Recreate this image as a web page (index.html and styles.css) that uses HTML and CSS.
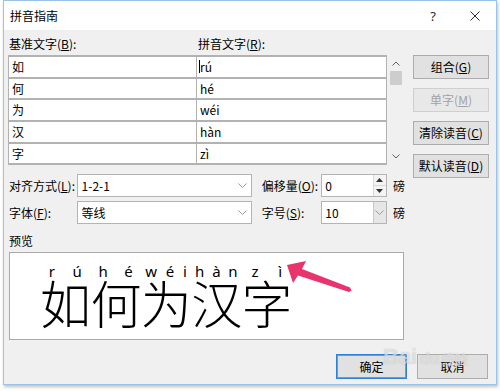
FILE: index.html
```html
<!DOCTYPE html>
<html lang="zh-CN">
<head>
<meta charset="utf-8">
<title>拼音指南</title>
<link rel="stylesheet" href="styles.css">
</head>
<body>
<div class="window">
  <div class="titlebar">
    <span class="title">拼音指南</span>
    <div class="tb-controls">
      <span class="tb-btn help">?</span>
      <span class="tb-btn close">
        <svg width="10" height="10" viewBox="0 0 10 10"><path d="M0.5 0.5L9.5 9.5M9.5 0.5L0.5 9.5" stroke="#2b2b2b" stroke-width="1" fill="none"/></svg>
      </span>
    </div>
  </div>
  <div class="content">
    <div class="main">
      <div class="list-area">
        <div class="col-labels">
          <span class="lbl-base">基准文字(<u>B</u>):</span>
          <span class="lbl-ruby">拼音文字(<u>R</u>):</span>
        </div>
        <div class="table-wrap">
          <div class="table">
            <div class="row"><span class="cell base">如</span><span class="cell ruby"><span class="caret"></span>rú</span></div>
            <div class="row"><span class="cell base">何</span><span class="cell ruby">hé</span></div>
            <div class="row"><span class="cell base">为</span><span class="cell ruby">wéi</span></div>
            <div class="row"><span class="cell base">汉</span><span class="cell ruby">hàn</span></div>
            <div class="row"><span class="cell base">字</span><span class="cell ruby">zì</span></div>
          </div>
          <div class="scrollbar">
            <svg class="sb-arrow" width="8" height="5" viewBox="0 0 8 5"><path d="M0.5 4.5L4 1L7.5 4.5" stroke="#606060" fill="none"/></svg>
            <div class="thumb"></div>
            <div class="sb-space"></div>
            <svg class="sb-arrow" width="8" height="5" viewBox="0 0 8 5"><path d="M0.5 0.5L4 4L7.5 0.5" stroke="#606060" fill="none"/></svg>
          </div>
        </div>
      </div>
      <div class="side">
        <button class="btn">组合(<u>G</u>)</button>
        <button class="btn disabled">单字(<u>M</u>)</button>
        <button class="btn">清除读音(<u>C</u>)</button>
        <button class="btn">默认读音(<u>D</u>)</button>
      </div>
      <div class="options">
        <div class="opt-row">
          <span class="opt-label">对齐方式(<u>L</u>):</span>
          <div class="combo">
            <span class="combo-text">1-2-1</span>
            <svg class="chev" width="9" height="5" viewBox="0 0 9 5"><path d="M0.5 0.5L4.5 4.5L8.5 0.5" stroke="#9a9a9a" fill="none"/></svg>
          </div>
          <span class="opt-label2">偏移量(<u>O</u>):</span>
          <div class="spin">
            <span class="spin-text">0</span>
            <div class="spin-btns">
              <div class="spin-btn"><svg width="7" height="4" viewBox="0 0 7 4"><path d="M0 4L3.5 0L7 4Z" fill="#333"/></svg></div>
              <div class="spin-btn"><svg width="7" height="4" viewBox="0 0 7 4"><path d="M0 0L3.5 4L7 0Z" fill="#333"/></svg></div>
            </div>
          </div>
          <span class="unit">磅</span>
        </div>
        <div class="opt-row">
          <span class="opt-label">字体(<u>F</u>):</span>
          <div class="combo">
            <span class="combo-text">等线</span>
            <svg class="chev" width="9" height="5" viewBox="0 0 9 5"><path d="M0.5 0.5L4.5 4.5L8.5 0.5" stroke="#9a9a9a" fill="none"/></svg>
          </div>
          <span class="opt-label2">字号(<u>S</u>):</span>
          <div class="spin">
            <span class="spin-text">10</span>
            <div class="drop-btn"><svg width="9" height="5" viewBox="0 0 9 5"><path d="M0.5 0.5L4.5 4.5L8.5 0.5" stroke="#9a9a9a" fill="none"/></svg></div>
          </div>
          <span class="unit">磅</span>
        </div>
      </div>
    </div>
    <div class="preview-label">预览</div>
    <div class="preview">
      <div class="ruby-line">
        <div class="syl"><span>r</span><span>ú</span></div>
        <div class="syl"><span>h</span><span>é</span></div>
        <div class="syl"><span>w</span><span>é</span><span>i</span></div>
        <div class="syl"><span>h</span><span>à</span><span>n</span></div>
        <div class="syl"><span>z</span><span>ì</span></div>
      </div>
      <div class="base-line">
        <span class="bc">如</span><span class="bc">何</span><span class="bc">为</span><span class="bc">汉</span><span class="bc">字</span>
      </div>
    </div>
    <div class="footer">
      <button class="btn fbtn default">确定</button>
      <button class="btn fbtn">取消</button>
    </div>
  </div>
</div>
<svg class="annot" width="500" height="391" viewBox="0 0 500 391">
  <polygon points="287,265 306,261 302,269 350,287.5 351.5,290.5 349,292 298,275.5 293,283" fill="#e8336d"/>
</svg>
<div class="watermark"><span class="wm-bai">Bai</span><span class="wm-du">du</span><span class="wm-jy">经验</span></div>
</body>
</html>
```

FILE: styles.css
```css
* { box-sizing: border-box; }
html, body { margin: 0; padding: 0; }
body {
  background: #ffffff;
  font-family: "Noto Sans CJK SC", "Noto Sans", sans-serif;
  font-size: 12px;
  color: #000;
  width: 500px;
  height: 391px;
  overflow: hidden;
  position: relative;
}
u { text-decoration: underline; text-underline-offset: 1px; }

.window {
  margin-left: 3px;
  width: 494px;
  height: 385px;
  border: 1px solid #9cc3ea;
  box-shadow: 1px 2px 3px rgba(0,0,0,0.25);
  display: flex;
  flex-direction: column;
  background: #f0f0f0;
}
.titlebar {
  height: 29px;
  background: #ffffff;
  display: flex;
  align-items: center;
  padding-left: 6px;
  flex: none;
}
.title { font-size: 12px; line-height: 16px; margin-top: 1px; }
.tb-controls { margin-left: auto; display: flex; height: 100%; }
.tb-btn {
  width: 42px;
  display: flex;
  align-items: center;
  justify-content: center;
  color: #2b2b2b;
}
.help { font-family: "Noto Sans", sans-serif; font-size: 13px; }

.content {
  flex: 1;
  padding: 6px 7px 5px 4px;
  display: flex;
  flex-direction: column;
}
.main {
  display: grid;
  grid-template-columns: 397px 76px;
  column-gap: 8px;
  row-gap: 9px;
}
.list-area { grid-column: 1; grid-row: 1; }
.side {
  grid-column: 2;
  grid-row: 1 / span 2;
  display: flex;
  flex-direction: column;
  gap: 9px;
  padding-top: 19px;
  align-self: start;
}
.options { grid-column: 1; grid-row: 2; display: flex; flex-direction: column; gap: 4px; }

.col-labels { display: flex; height: 16px; line-height: 16px; margin-bottom: 3px; }
.lbl-base { width: 189px; padding-left: 1px; }
.lbl-ruby { padding-left: 1px; }

.table-wrap { display: flex; }
.table {
  width: 379px;
  background: #fff;
  border-top: 2px solid #b2b2b2;
  border-left: 1px solid #b2b2b2;
}
.row {
  display: flex;
  height: 21.7px;
  border-bottom: 2px solid #b2b2b2;
}
.cell { display: flex; align-items: center; line-height: 16px; }
.cell.base { width: 188px; padding-left: 3px; border-right: 1px solid #b2b2b2; }
.cell.ruby { flex: 1; padding-left: 3px; border-right: 1px solid #b2b2b2; position: relative; }
.caret { width: 1px; height: 13px; background: #000; margin-right: 0px; margin-left: -1px; }

.scrollbar {
  width: 18px;
  display: flex;
  flex-direction: column;
  align-items: center;
  background: #f0f0f0;
}
.sb-arrow { margin-top: 6px; margin-bottom: 5px; flex: none; }
.scrollbar .sb-arrow:last-child { margin-top: 0; margin-bottom: 6px; }
.thumb { width: 12px; height: 14px; background: #cdcdcd; margin-top: 0; }
.sb-space { flex: 1; }

.btn {
  font-family: "Noto Sans CJK SC", sans-serif;
  font-size: 12px;
  color: #000;
  background: #e1e1e1;
  border: 1px solid #adadad;
  height: 24px;
  padding: 0;
  display: flex;
  align-items: center;
  justify-content: center;
  line-height: 16px;
}
.btn.disabled { color: #a3a3a3; background: #e8e8e8; border-color: #cfcfcf; }

.opt-row { display: flex; align-items: center; height: 23px; }
.opt-label { width: 69px; padding-left: 1px; }
.combo {
  width: 176px;
  height: 23px;
  background: #fff;
  border: 1px solid #b4b4b4;
  display: flex;
  align-items: center;
  padding-left: 4px;
  padding-right: 4px;
}
.combo-text { flex: 1; }
.chev { flex: none; }
.opt-label2 { width: 60px; margin-left: 10px; }
.spin {
  width: 66px;
  height: 23px;
  background: #fff;
  border: 1px solid #b4b4b4;
  display: flex;
  align-items: center;
  padding-left: 3px;
}
.spin-text { flex: 1; }
.spin-btns { width: 13px; height: 100%; display: flex; flex-direction: column; border-left: 1px solid #d9d9d9; }
.spin-btn { flex: 1; display: flex; align-items: center; justify-content: center; background: #f4f4f4; }
.spin-btn + .spin-btn { border-top: 1px solid #d9d9d9; }
.drop-btn {
  width: 13px;
  height: 100%;
  background: #e6e6e6;
  border-left: 1px solid #c8c8c8;
  display: flex;
  align-items: center;
  justify-content: center;
}
.unit { margin-left: 6px; }

.preview-label { margin-top: 9px; height: 16px; line-height: 16px; padding-left: 1px; }
.preview {
  margin-top: 3px;
  margin-left: 1px;
  width: 395px;
  height: 88px;
  background: #fff;
  border: 1px solid #a9a9a9;
  padding: 9px 0 0 30px;
}
.ruby-line {
  display: flex;
  height: 15px;
  line-height: 18px;
  font-family: "Noto Sans", sans-serif;
  font-size: 15px;
}
.syl { width: 50.4px; display: flex; justify-content: space-around; }
.base-line { display: flex; height: 50px; line-height: 50px; }
.bc {
  width: 50.4px;
  font-size: 51px;
  font-weight: 300;
  text-align: center;
  display: block;
}

.footer {
  margin-top: 14px;
  display: flex;
  justify-content: flex-end;
  gap: 10px;
  padding-right: 1px;
}
.fbtn { width: 71px; height: 25px; }
.fbtn.default { border: 1px solid #2f7fd6; box-shadow: inset 0 0 0 1px #5ea0e6; }

.annot { position: absolute; left: 0; top: 0; pointer-events: none; }
.watermark {
  position: absolute;
  left: 383px;
  top: 344px;
  display: flex;
  align-items: baseline;
  pointer-events: none;
  color: rgba(255,255,255,0.55);
  text-shadow: 0 0 1px rgba(120,120,120,0.45);
  font-family: "Liberation Sans", sans-serif;
  font-weight: bold;
}
.wm-bai { font-size: 22px; }
.wm-du { font-size: 16px; margin-left: 3px; }
.wm-jy { font-family: "Noto Sans CJK SC", sans-serif; font-size: 13px; margin-left: 2px; }
```
